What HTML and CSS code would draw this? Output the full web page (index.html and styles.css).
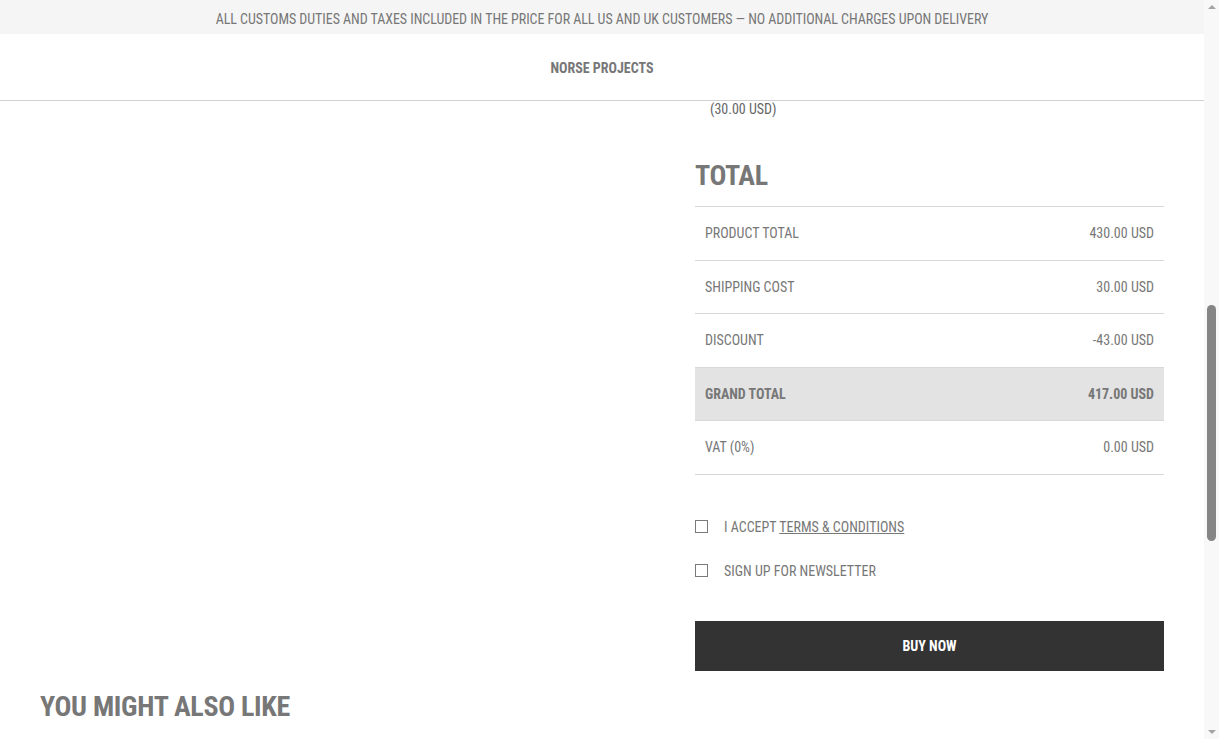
FILE: index.html
```html
<!DOCTYPE html>
<html lang="en">
<head>
<meta charset="utf-8">
<title>Checkout</title>
<link rel="stylesheet" href="styles.css">
</head>
<body>
<div class="page">
  <header class="site-header">
    <div class="banner">ALL CUSTOMS DUTIES AND TAXES INCLUDED IN THE PRICE FOR ALL US AND UK CUSTOMERS — NO ADDITIONAL CHARGES UPON DELIVERY</div>
    <nav class="nav"><span class="brand">NORSE PROJECTS</span></nav>
  </header>
  <main class="main">
    <div class="columns">
      <div class="left"></div>
      <div class="right">
        <div class="ship-note">(30.00 USD)</div>
        <h2 class="total-title">TOTAL</h2>
        <div class="totals">
          <div class="row"><span>PRODUCT TOTAL</span><span>430.00 USD</span></div>
          <div class="row"><span>SHIPPING COST</span><span>30.00 USD</span></div>
          <div class="row"><span>DISCOUNT</span><span>-43.00 USD</span></div>
          <div class="row grand"><span>GRAND TOTAL</span><span>417.00 USD</span></div>
          <div class="row"><span>VAT (0%)</span><span>0.00 USD</span></div>
        </div>
        <div class="checks">
          <label class="check"><span class="box"></span><span>I ACCEPT <u>TERMS &amp; CONDITIONS</u></span></label>
          <label class="check"><span class="box"></span><span>SIGN UP FOR NEWSLETTER</span></label>
        </div>
        <button class="buy">BUY NOW</button>
      </div>
    </div>
    <h2 class="also">YOU MIGHT ALSO LIKE</h2>
  </main>
</div>
<div class="scrollbar">
  <span class="arrow up"></span>
  <span class="track"><span class="thumb"></span></span>
  <span class="arrow down"></span>
</div>
</body>
</html>
```
FILE: styles.css
```css
* { box-sizing: border-box; }
html, body { margin: 0; height: 100%; overflow: hidden; }
body {
  display: flex;
  font-family: "Roboto Condensed", Roboto, "Liberation Sans", sans-serif;
  font-stretch: condensed;
  color: #777;
  background: #fff;
}
.page { width: 1204px; flex: none; }
.banner {
  height: 34px;
  padding-top: 3px;
  background: #f5f5f5;
  display: flex; align-items: center; justify-content: center;
  font-size: 14px;
  letter-spacing: -0.05px;
  color: #777;
}
.nav {
  height: 67px;
  padding-top: 2px;
  border-bottom: 1px solid #d0d0d0;
  display: flex; align-items: center; justify-content: center;
}
.brand { font-size: 14px; font-weight: 700; color: #777; }
.main { padding: 0 40px; }
.columns { display: grid; grid-template-columns: 1fr 469px; }
.ship-note { padding: 0 0 0 15px; font-size: 14px; color: #666; line-height: 16px; margin-top: 0; }
.total-title {
  margin: 41px 0 0; font-size: 28px; letter-spacing: -0.3px; font-weight: 700; color: #777; line-height: 36px;
}
.totals { margin-top: 12px; border-top: 1px solid #d8d8d8; }
.row {
  display: flex; justify-content: space-between; align-items: center;
  height: 53.5px; padding: 0 10px;
  border-bottom: 1px solid #d8d8d8;
  font-size: 14px; color: #777;
}
.row.grand { background: #e3e3e3; font-weight: 700; }
.checks { margin-top: 44px; display: flex; flex-direction: column; gap: 28px; }
.check { display: flex; align-items: center; gap: 16px; font-size: 14px; color: #777; height: 16px; }
.box { width: 13px; height: 13px; border: 1px solid #7a7a7a; background: #fff; flex: none; }
.buy {
  margin-top: 42px; width: 100%; height: 50px; border: 0;
  background: #333; color: #fff; font-family: inherit; font-size: 14px; font-weight: 700;
}
.also { margin: 18px 0 0; font-size: 28px; letter-spacing: -0.3px; font-weight: 700; color: #777; line-height: 36px; }
.scrollbar {
  width: 15px; flex: none; background: #f8f8f8;
  display: flex; flex-direction: column; align-items: center; height: 100%;
}
.arrow { width: 0; height: 0; border-left: 4px solid transparent; border-right: 4px solid transparent; margin: 5px 0; }
.arrow.up { border-bottom: 4px solid #a3a3a3; }
.arrow.down { border-top: 4px solid #a3a3a3; }
.track { flex: 1; width: 100%; display: flex; flex-direction: column; align-items: center; }
.thumb { margin-top: 291px; width: 9px; height: 236px; background: #858585; border-radius: 5px; }
```
